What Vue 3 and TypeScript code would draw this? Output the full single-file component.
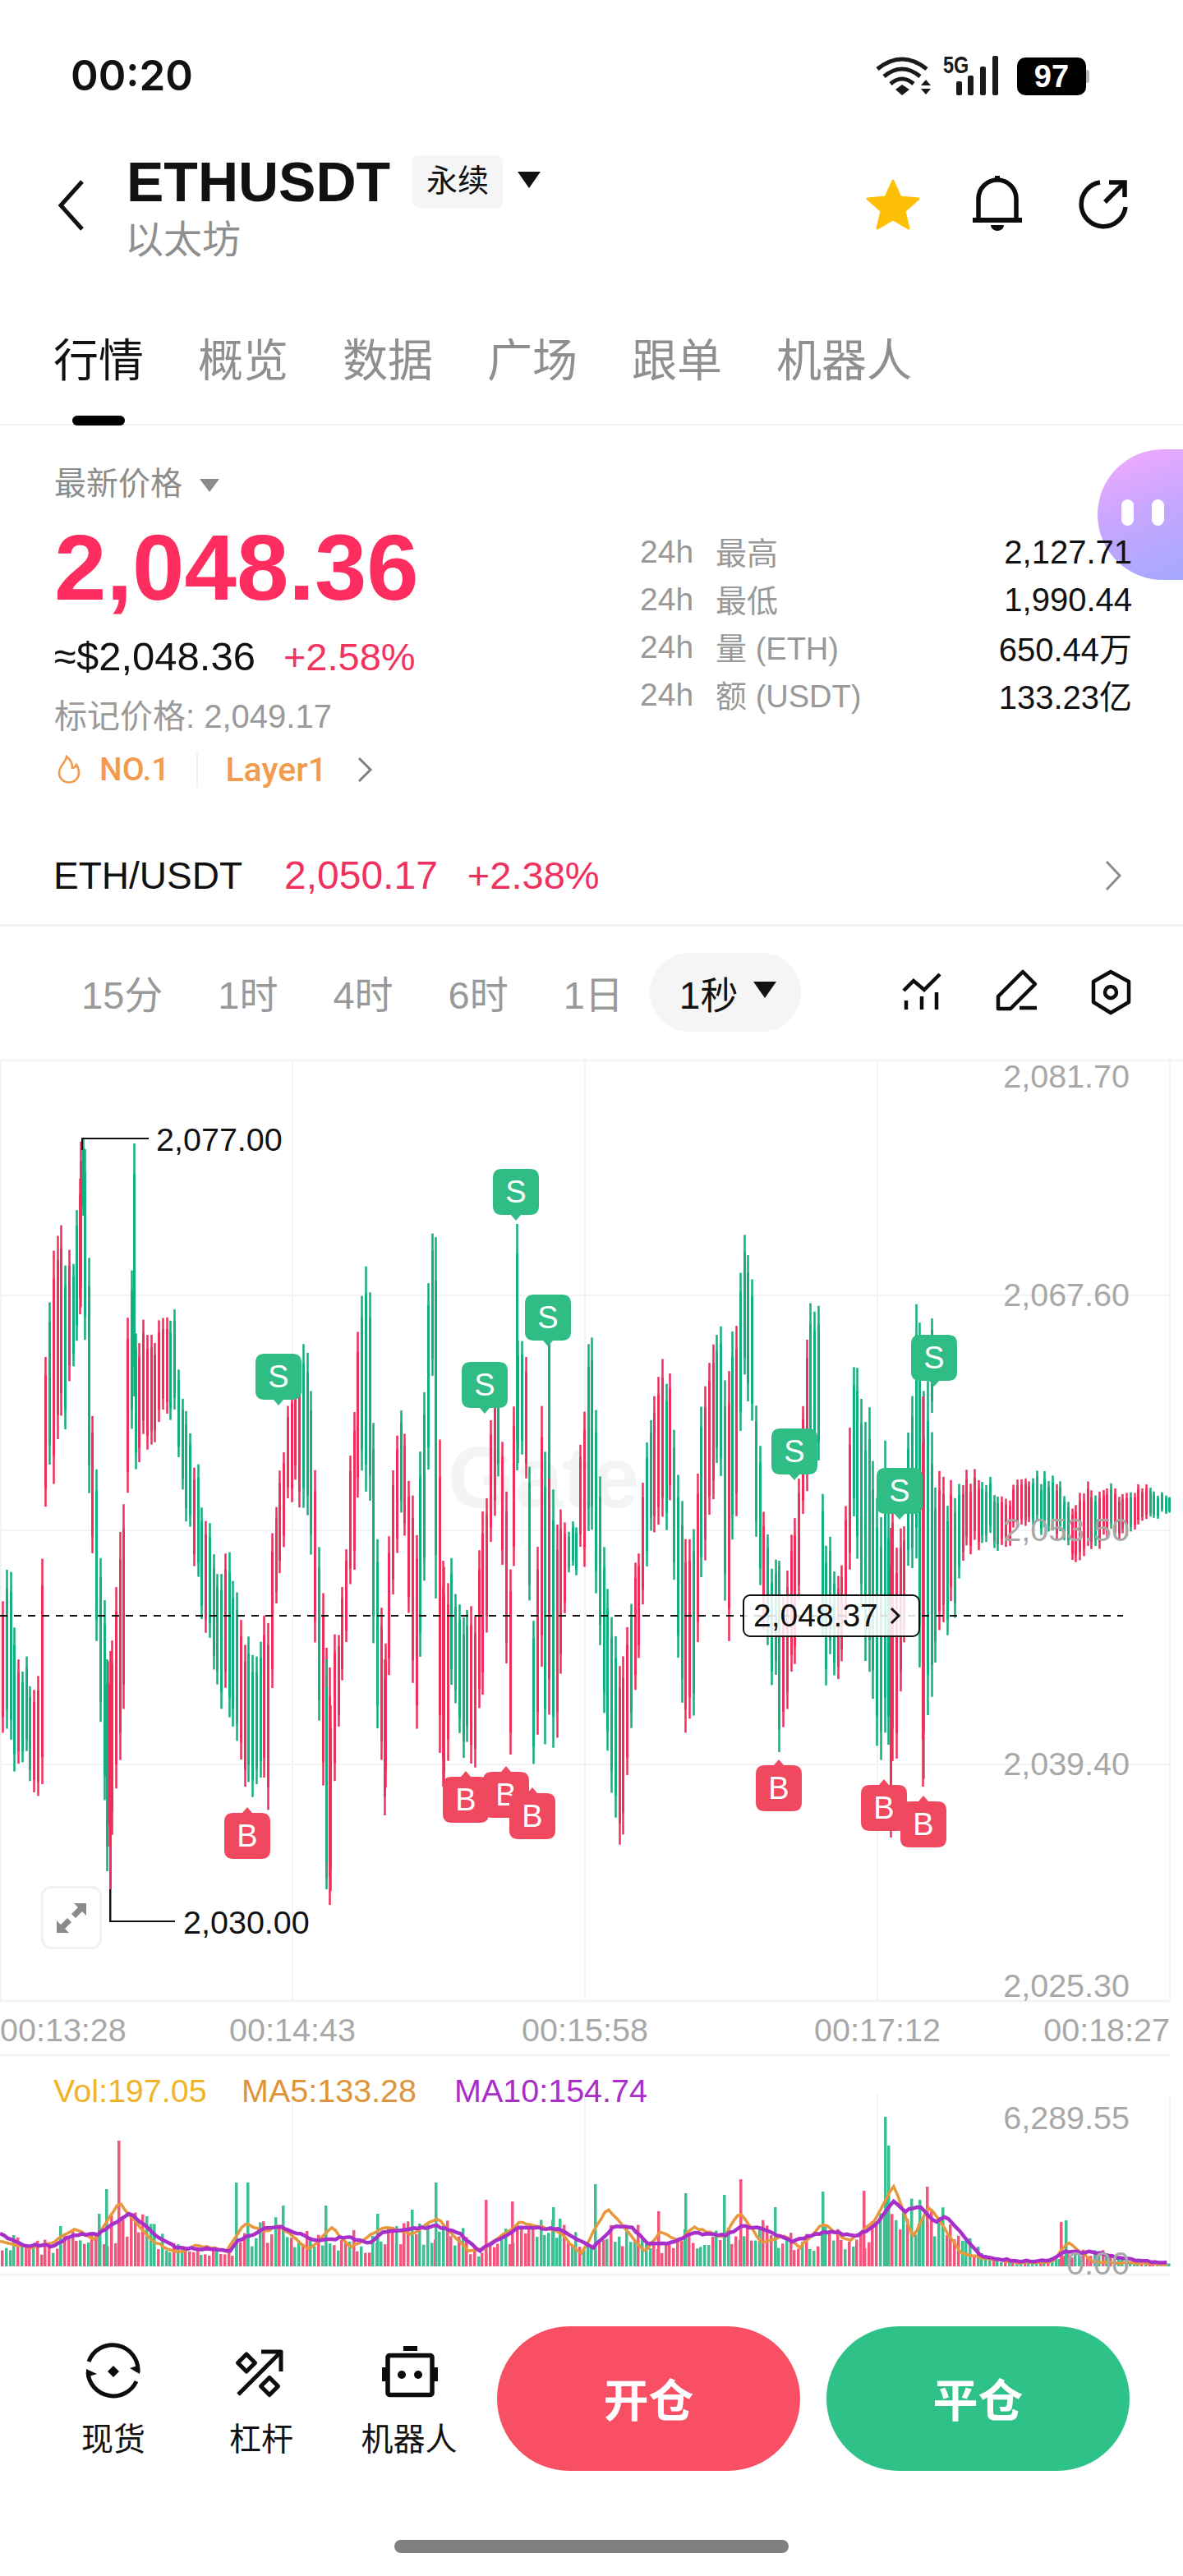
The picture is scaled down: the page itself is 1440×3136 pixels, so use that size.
<script setup lang="ts">
type Bar = { x: number; top: number; bottom: number; up: boolean }

const makeRandom = (seed: number) => () => {
  seed = (seed + 0x6d2b79f5) | 0
  let t = Math.imul(seed ^ (seed >>> 15), 1 | seed)
  t = (t + Math.imul(t ^ (t >>> 7), 61 | t)) ^ t
  return ((t ^ (t >>> 14)) >>> 0) / 4294967296
}

const lerp = (pts: number[][], x: number, col = 1) => {
  for (let i = 1; i < pts.length; i++) {
    if (x <= pts[i][0]) {
      const a = pts[i - 1]
      const b = pts[i]
      const k = (x - a[0]) / (b[0] - a[0] || 1)
      return a[col] + (b[col] - a[col]) * k
    }
  }
  return pts[pts.length - 1][col]
}

// x, top of bars, bottom of bars
const range = [
  [0, 1945, 2095], [10, 1875, 2120], [20, 2010, 2150], [30, 2020, 2150], [44, 2060, 2200],
  [50, 1860, 2200], [55, 1613, 1808], [66, 1528, 1855], [75, 1495, 1755], [86, 1557, 1690],
  [96, 1393, 1600], [105, 1402, 1755], [110, 1718, 1900], [118, 1815, 2050], [130, 2020, 2280],
  [150, 1802, 2095], [156, 1483, 1703], [165, 1630, 1790], [210, 1598, 1720], [225, 1710, 1850],
  [240, 1790, 1940], [260, 1900, 2065], [280, 1890, 2100], [300, 1990, 2190], [315, 2020, 2200],
  [325, 1925, 2190], [335, 1820, 1950], [350, 1700, 1830], [375, 1600, 1830], [385, 1843, 2065],
  [395, 1995, 2280], [400, 2020, 2300], [410, 2000, 2115], [420, 1880, 2010], [432, 1640, 1870],
  [445, 1535, 1830], [455, 1730, 2020], [465, 2020, 2210], [480, 1730, 1910], [490, 1720, 1840],
  [505, 1855, 2145], [520, 1540, 1800], [525, 1522, 1690], [530, 1560, 2110], [540, 1890, 2175],
  [550, 1920, 2070], [570, 1975, 2170], [585, 1870, 2115], [595, 1730, 1910], [605, 1650, 1800],
  [620, 1890, 2160], [627, 1600, 1785], [640, 1650, 1800], [648, 1970, 2170], [660, 1695, 2095],
  [675, 1820, 2165], [690, 1860, 1915], [700, 1850, 1915], [712, 1650, 1905], [720, 1620, 1870],
  [733, 1880, 2100], [745, 1960, 2220], [757, 2000, 2237], [775, 1880, 2035], [790, 1730, 1890],
  [800, 1660, 1870], [815, 1650, 1840], [827, 1830, 2100], [840, 1860, 2115], [855, 1650, 1890],
  [875, 1615, 1790], [885, 1680, 2060], [895, 1580, 1820], [903, 1478, 1690], [912, 1528, 1730],
  [920, 1745, 1930], [932, 1870, 2025], [945, 1920, 2085], [960, 1900, 2095], [975, 1720, 1880],
  [985, 1575, 1790], [995, 1600, 1840], [1000, 1840, 2050], [1015, 1880, 2020], [1025, 1920, 2060],
  [1035, 1650, 1850], [1048, 1650, 1950], [1060, 1720, 2075], [1075, 1785, 2155], [1085, 1860, 2235],
  [1098, 1880, 2025], [1110, 1620, 1880], [1122, 1605, 2175], [1140, 1790, 2000], [1160, 1800, 1960],
  [1170, 1800, 1900], [1190, 1790, 1885], [1220, 1820, 1880], [1250, 1800, 1860], [1285, 1790, 1870],
  [1300, 1830, 1890], [1315, 1810, 1900], [1340, 1810, 1880], [1375, 1815, 1870], [1400, 1810, 1850],
  [1424, 1825, 1845],
]

const step = 4.75
const rnd = makeRandom(20481)
const bars: Bar[] = []
for (let x = 2; x < 1424; x += step) {
  const top = lerp(range, x, 1)
  const bottom = lerp(range, x, 2)
  const size = bottom - top
  // bars stagger up and down inside the range
  const shift = (rnd() - 0.5) * size * 0.28
  const mid = (lerp(range, x + 8, 1) + lerp(range, x + 8, 2)) / 2
  const rising = mid < (top + bottom) / 2
  bars.push({
    x: Math.round(x),
    top: top + shift + rnd() * size * 0.12,
    bottom: bottom + shift - rnd() * size * 0.12,
    up: rnd() < 0.18 ? !rising : rising,
  })
}
// the long wicks
bars.push(
  { x: 96, top: 1435, bottom: 1600, up: true },
  { x: 100, top: 1386, bottom: 1480, up: false },
  { x: 129, top: 2020, bottom: 2278, up: false },
  { x: 133, top: 2010, bottom: 2339, up: true },
  { x: 162, top: 1392, bottom: 1700, up: false },
  { x: 396, top: 2020, bottom: 2300, up: false },
  { x: 400, top: 2030, bottom: 2319, up: true },
  { x: 467, top: 2020, bottom: 2210, up: true },
  { x: 538, top: 1900, bottom: 2175, up: true },
  { x: 628, top: 1490, bottom: 1790, up: false },
  { x: 667, top: 1615, bottom: 1800, up: false },
  { x: 947, top: 1900, bottom: 2133, up: false },
  { x: 1083, top: 1860, bottom: 2237, up: true },
  { x: 1122, top: 1700, bottom: 2175, up: true },
  { x: 1133, top: 1605, bottom: 1720, up: false },
)

const markers = [
  { kind: 'S', x: 311, y: 1648 }, { kind: 'S', x: 562, y: 1658 }, { kind: 'S', x: 600, y: 1423 },
  { kind: 'S', x: 639, y: 1576 }, { kind: 'S', x: 939, y: 1739 }, { kind: 'S', x: 1067, y: 1787 },
  { kind: 'S', x: 1109, y: 1625 },
  { kind: 'B', x: 273, y: 2207 }, { kind: 'B', x: 588, y: 2157 }, { kind: 'B', x: 539, y: 2163 },
  { kind: 'B', x: 620, y: 2183 }, { kind: 'B', x: 920, y: 2149 }, { kind: 'B', x: 1048, y: 2173 },
  { kind: 'B', x: 1096, y: 2193 },
]

const markerPath = (m: { kind: string; x: number; y: number }) => {
  const l = m.x
  const r = m.x + 56
  const t = m.y
  const b = m.y + 56
  const c = m.x + 28
  const rad = 11
  const tail = m.kind === 'S'
    ? `L${c + 6} ${b} L${c} ${b + 7} L${c - 6} ${b} `
    : ''
  const head = m.kind === 'B' ? `L${c - 6} ${t} L${c} ${t - 7} L${c + 6} ${t} ` : ''
  return `M${l + rad} ${t} ${head}L${r - rad} ${t} Q${r} ${t} ${r} ${t + rad} L${r} ${b - rad} Q${r} ${b} ${r - rad} ${b} ${tail}L${l + rad} ${b} Q${l} ${b} ${l} ${b - rad} L${l} ${t + rad} Q${l} ${t} ${l + rad} ${t}Z`
}

// volume panel, traced as [x, y] on the page
const toPage = (p: number[][]) => p.map(([x, y]) => [x / 1.089, 2280 + y / 3])
const ma10 = toPage([
  [0, 1320], [30, 1360], [70, 1362], [100, 1320], [130, 1320], [172, 1240], [205, 1320], [235, 1370],
  [290, 1375], [305, 1385], [315, 1345], [355, 1295], [375, 1295], [420, 1345], [460, 1330], [490, 1350],
  [510, 1310], [545, 1300], [580, 1290], [610, 1320], [635, 1380], [690, 1295], [740, 1300], [785, 1370],
  [815, 1290], [835, 1290], [860, 1355], [895, 1350], [915, 1315], [960, 1325], [985, 1290], [1010, 1300],
  [1050, 1345], [1095, 1310], [1135, 1325], [1160, 1290], [1185, 1200], [1200, 1235], [1218, 1215],
  [1240, 1275], [1255, 1255], [1300, 1400], [1350, 1420], [1395, 1415], [1410, 1385], [1450, 1385],
  [1490, 1410], [1550, 1425],
])
const ma5 = toPage([
  [0, 1345], [40, 1370], [70, 1350], [100, 1300], [125, 1340], [158, 1205], [200, 1340], [235, 1390],
  [260, 1360], [300, 1380], [325, 1280], [350, 1310], [370, 1290], [410, 1375], [440, 1295], [465, 1370],
  [510, 1290], [545, 1320], [580, 1260], [620, 1380], [640, 1375], [690, 1275], [740, 1310], [770, 1390],
  [805, 1225], [855, 1385], [875, 1310], [900, 1345], [920, 1295], [960, 1330], [980, 1240], [1010, 1350],
  [1040, 1325], [1060, 1370], [1090, 1280], [1125, 1345], [1160, 1270], [1185, 1140], [1210, 1330],
  [1232, 1220], [1275, 1390], [1310, 1410], [1350, 1425], [1395, 1420], [1415, 1350], [1450, 1420],
  [1550, 1430],
])

const volBase = 2759
const volRnd = makeRandom(7719)
const volBars: Bar[] = []
for (let x = 1; x < 1424; x += step) {
  const h = (volBase - lerp(ma10, x)) * (0.5 + volRnd() * 0.8)
  volBars.push({ x: Math.round(x), top: volBase - h, bottom: volBase, up: volRnd() > 0.48 })
}
const spikes: [number, number, boolean][] = [
  [143, 2606, true], [128, 2665, false], [119, 2695, false], [72, 2710, false], [286, 2657, false],
  [300, 2657, false], [343, 2685, false], [395, 2685, false], [458, 2695, false], [500, 2690, false],
  [529, 2657, false], [590, 2678, true], [622, 2680, true], [672, 2687, false], [723, 2659, false],
  [800, 2692, true], [833, 2670, false], [880, 2672, false], [900, 2653, true], [942, 2687, false],
  [1000, 2668, false], [1050, 2667, true], [1076, 2577, false], [1080, 2612, false], [1118, 2678, false],
  [1127, 2662, true], [1290, 2705, true], [1296, 2703, false],
]
for (const [x, top, up] of spikes) volBars.push({ x, top, bottom: volBase, up })

const maLine = (pts: number[][], seed: number) => {
  const r = makeRandom(seed)
  const out: string[] = []
  for (let x = 0; x <= 1424; x += step) {
    out.push(`${x.toFixed(1)},${(lerp(pts, x) + (r() - 0.5) * 2.4).toFixed(1)}`)
  }
  return out.join(' ')
}
const ma5Line = maLine(ma5, 11)
const ma10Line = maLine(ma10, 23)

const tabs = ['行情', '概览', '数据', '广场', '跟单', '机器人']
const periods = ['15分', '1时', '4时', '6时', '1日']
const stats = [
  { label: '最高', value: '2,127.71' },
  { label: '最低', value: '1,990.44' },
  { label: '量 (ETH)', value: '650.44万' },
  { label: '额 (USDT)', value: '133.23亿' },
]
const priceTicks = [
  { text: '2,081.70', y: 1324 },
  { text: '2,067.60', y: 1590 },
  { text: '2,053.50', y: 1876 },
  { text: '2,039.40', y: 2161 },
  { text: '2,025.30', y: 2431 },
]
const gridX = [356, 712, 1068, 1424]
const gridY = [1577, 1863, 2148]
</script>

<template>
  <div class="page">
    <div class="status">
      <span class="clock">00:20</span>
      <div class="status-icons">
        <svg class="wifi" width="70" height="50" viewBox="0 0 70 50" fill="none" stroke="#1a1a1a" stroke-width="5">
          <path d="M3 16 Q33 -8 63 16" />
          <path d="M11 25 Q33 7 55 25" />
          <path d="M19 34 Q33 22 47 34" />
          <path d="M25 41 L33 35 L42 41 L33 48 Z" fill="#1a1a1a" stroke="none" />
          <path d="M62 29 L68 36 L56 36 Z M56 40 L68 40 L62 47 Z" fill="#1a1a1a" stroke="none" />
        </svg>
        <div class="signal">
          <span class="five-g">5G</span>
          <i class="sig s1"></i><i class="sig s2"></i><i class="sig s3"></i><i class="sig s4"></i>
        </div>
        <div class="battery"><span>97</span></div>
      </div>
    </div>

    <header class="head">
      <svg class="back" width="36" height="64" viewBox="0 0 36 64" fill="none" stroke="#111" stroke-width="5">
        <path d="M32 3 L6 32 L32 61" />
      </svg>
      <div class="title">
        <div class="title-line">
          <span class="symbol">ETHUSDT</span>
          <span class="chip">永续</span>
          <i class="tri"></i>
        </div>
        <div class="coin">以太坊</div>
      </div>
      <div class="head-actions">
        <svg width="70" height="66" viewBox="0 0 70 66">
          <path d="M35 4 L44 24 L66 26 L49 41 L54 62 L35 51 L16 62 L21 41 L4 26 L26 24 Z" fill="#fdc006" stroke="#fdc006" stroke-width="3" stroke-linejoin="round" />
        </svg>
        <svg width="60" height="70" viewBox="0 0 60 70" fill="none" stroke="#0c0c0c" stroke-width="5.5">
          <path d="M7 52 V28 A23 23 0 0 1 53 28 V52" />
          <path d="M0 54 H60" stroke-width="6" />
          <path d="M30 0 V6" stroke-width="6" />
          <path d="M22 60 H38 A8 7 0 0 1 22 60 Z" fill="#0c0c0c" stroke="none" />
        </svg>
        <svg class="share" width="62" height="60" viewBox="0 0 62 60" fill="none" stroke="#0c0c0c" stroke-width="5.5">
          <path d="M27 3 A27 27 0 1 0 58 33" />
          <path d="M33 27 L56 4" />
          <path d="M38 3 H57 V21" />
        </svg>
      </div>
    </header>

    <nav class="tabs">
      <span v-for="(t, i) in tabs" :key="t" class="tab" :class="{ on: i === 0 }">{{ t }}</span>
    </nav>

    <section class="quote">
      <div class="bubble"><i></i><i></i></div>
      <div class="quote-left">
        <div class="last-label">最新价格 <i class="tri small"></i></div>
        <div class="last-price">2,048.36</div>
        <div class="usd-line">
          <span class="usd">≈$2,048.36</span>
          <span class="pct">+2.58%</span>
        </div>
        <div class="mark">标记价格: 2,049.17</div>
        <div class="tags">
          <svg width="28" height="36" viewBox="0 0 28 36" fill="none" stroke="#f29b4e" stroke-width="2.6">
            <path d="M11 2 C11 8 2 13 2 22 A12 11.5 0 0 0 26 22 C26 18 25 15 23 12 C22 14 20 16 18 16 C18 10 15 5 11 2 Z" />
          </svg>
          <span class="no">NO.1</span>
          <i class="tag-sep"></i>
          <span class="layer">Layer1</span>
          <svg class="tag-arrow" width="20" height="32" viewBox="0 0 20 32" fill="none" stroke="#808080" stroke-width="3">
            <path d="M3 2 L17 16 L3 30" />
          </svg>
        </div>
      </div>
      <div class="quote-right">
        <div v-for="s in stats" :key="s.label" class="stat">
          <span class="stat-h">24h</span>
          <span class="stat-label">{{ s.label }}</span>
          <span class="stat-value">{{ s.value }}</span>
        </div>
      </div>
    </section>

    <div class="spot-row">
      <span class="spot-name">ETH/USDT</span>
      <span class="spot-price">2,050.17</span>
      <span class="spot-pct">+2.38%</span>
      <svg class="spot-arrow" width="22" height="38" viewBox="0 0 22 38" fill="none" stroke="#8c8c8c" stroke-width="3">
        <path d="M3 2 L19 19 L3 36" />
      </svg>
    </div>

    <div class="periods">
      <span v-for="p in periods" :key="p" class="period">{{ p }}</span>
      <span class="period-pill">1秒 <i class="tri"></i></span>
      <div class="tools">
        <svg width="60" height="60" viewBox="0 0 60 60" fill="none" stroke="#0c0c0c" stroke-width="4.5">
          <path d="M8 28 L20 16 L33 27 L52 8" />
          <path d="M11 40 V51 M30 35 V51 M48 30 V51" />
        </svg>
        <svg width="60" height="60" viewBox="0 0 60 60" fill="none" stroke="#0c0c0c" stroke-width="4.5" stroke-linejoin="round">
          <path d="M38 5 L53 20 L23 50 L8 50 L8 35 Z" />
          <path d="M34 49 H55" />
        </svg>
        <svg width="60" height="60" viewBox="0 0 60 60" fill="none" stroke="#0c0c0c" stroke-width="4.5" stroke-linejoin="round">
          <path d="M30 5 L52 17 L52 42 L30 55 L9 42 L9 17 Z" />
          <circle cx="30" cy="30" r="7" />
        </svg>
      </div>
    </div>

    <div class="chart">
      <svg class="chart-svg" width="1440" height="1480" viewBox="0 1290 1440 1480">
        <g stroke="#f3f3f3" stroke-width="2">
          <path d="M0 1291 H1440 M0 2436 H1424 M0 2502 H1424 M0 2769 H1424" stroke-width="3" />
          <path v-for="y in gridY" :key="y" :d="`M0 ${y} H1424`" />
          <path d="M1 1291 V2436" />
          <path v-for="x in gridX" :key="x" :d="`M${x} 1291 V2436 M${x} 2550 V2759`" />
        </g>
        <text x="545" y="1835" class="mark-logo">Gate</text>

        <g v-for="(b, i) in bars" :key="i" :fill="b.up ? '#ee2f5c' : '#12b07f'">
          <rect :x="b.x + 0.25" :y="b.top" width="2.5" :height="b.bottom - b.top" />
          <rect :x="b.x" :y="b.top + (b.bottom - b.top) * 0.12" width="3" :height="(b.bottom - b.top) * 0.76" />
        </g>

        <path d="M100 1400 V1386 H181 M134 2300 V2339 H213" fill="none" stroke="#111" stroke-width="2" />
        <text x="190" y="1401" class="tick dark">2,077.00</text>
        <text x="223" y="2354" class="tick dark">2,030.00</text>

        <path d="M0 1967 H1367" stroke="#111" stroke-width="2" stroke-dasharray="9 8" />

        <g v-for="(m, i) in markers" :key="i">
          <path :d="markerPath(m)" :fill="m.kind === 'S' ? '#2fbd85' : '#f0485f'" />
          <text :x="m.x + 28" :y="m.y + 41" class="marker-text">{{ m.kind }}</text>
        </g>

        <text v-for="t in priceTicks" :key="t.text" x="1375" :y="t.y" class="tick end">{{ t.text }}</text>
        <text x="0" y="2485" class="tick">00:13:28</text>
        <text x="356" y="2485" class="tick mid">00:14:43</text>
        <text x="712" y="2485" class="tick mid">00:15:58</text>
        <text x="1068" y="2485" class="tick mid">00:17:12</text>
        <text x="1424" y="2485" class="tick end">00:18:27</text>

        <text x="65" y="2559" class="tick vol">Vol:197.05</text>
        <text x="294" y="2559" class="tick ma5">MA5:133.28</text>
        <text x="553" y="2559" class="tick ma10">MA10:154.74</text>
        <text x="1375" y="2592" class="tick end">6,289.55</text>

        <rect v-for="(b, i) in volBars" :key="i" :x="b.x" :y="b.top" width="3.5" :height="b.bottom - b.top" :fill="b.up ? '#f2567d' : '#3dbe93'" />
        <polyline :points="ma5Line" fill="none" stroke="#e8973a" stroke-width="3.5" />
        <polyline :points="ma10Line" fill="none" stroke="#a92fcb" stroke-width="4.5" />
        <text x="1375" y="2769" class="tick end">0.00</text>
      </svg>

      <div class="price-tag">
        <span>2,048.37</span>
        <svg width="16" height="22" viewBox="0 0 16 22" fill="none" stroke="#111" stroke-width="3">
          <path d="M3 2 L12 11 L3 20" />
        </svg>
      </div>
      <div class="expand">
        <svg width="38" height="38" viewBox="0 0 38 38" fill="#8a8a8a">
          <path d="M22 1 H37 V16 L32 11 L24 19 L19 14 L27 6 Z" />
          <path d="M1 22 V37 H16 L11 32 L19 24 L14 19 L6 27 Z" />
        </svg>
      </div>
    </div>

    <footer class="foot">
      <div class="shortcut">
        <svg width="70" height="70" viewBox="0 0 70 70" fill="none" stroke="#0c0c0c" stroke-width="5">
          <path d="M5 23 A31 31 0 0 1 65 36" />
          <path d="M4 36 A31 31 0 0 0 63 47" />
          <path d="M35 28 L42 35 L35 42 L28 35 Z" fill="#0c0c0c" stroke="none" />
          <path d="M55 31 L67 27 L67 38 Z M2 32 L15 38 L2 42 Z" fill="#0c0c0c" stroke="none" />
        </svg>
        <span>现货</span>
      </div>
      <div class="shortcut">
        <svg width="70" height="70" viewBox="0 0 70 70" fill="none" stroke="#0c0c0c" stroke-width="5" stroke-linejoin="round">
          <path d="M7 63 L58 12" />
          <path d="M35 11 H59 V35" />
          <path d="M17 14 L27.5 24.5 L17 35 L6.5 24.5 Z" />
          <path d="M45 42.5 L55.5 53 L45 63.5 L34.5 53 Z" />
        </svg>
        <span>杠杆</span>
      </div>
      <div class="shortcut">
        <svg width="70" height="70" viewBox="0 0 70 70" fill="#0c0c0c">
          <rect x="28" y="4" width="17" height="6" />
          <rect x="9" y="15.5" width="54" height="48" rx="2" fill="none" stroke="#0c0c0c" stroke-width="5.5" />
          <rect x="2" y="30" width="5" height="17" />
          <rect x="65" y="30" width="5" height="17" />
          <circle cx="26" cy="39" r="5" />
          <circle cx="46" cy="39" r="5" />
        </svg>
        <span>机器人</span>
      </div>
      <button class="trade open">开仓</button>
      <button class="trade close">平仓</button>
    </footer>
    <div class="home-bar"><i></i></div>
  </div>
</template>

<style>
body {
  background: #fff;
}
</style>

<style scoped>
.page {
  width: 1440px;
  height: 3136px;
  overflow: hidden;
  background: #fff;
  color: #111;
  font-family: "Liberation Sans", "Noto Sans CJK SC", sans-serif;
}

.tri {
  display: inline-block;
  width: 0;
  height: 0;
  border-left: 14px solid transparent;
  border-right: 14px solid transparent;
  border-top: 20px solid #111;
}

.tri.small {
  border-left-width: 12px;
  border-right-width: 12px;
  border-top: 16px solid #8c8c8c;
  margin-left: 10px;
  vertical-align: 3px;
}

.status {
  height: 150px;
  display: flex;
  justify-content: space-between;
  align-items: flex-start;
  padding: 62px 118px 0 86px;
  box-sizing: border-box;
}

.clock {
  font-family: Inter, "Liberation Sans", sans-serif;
  font-weight: 600;
  font-size: 51px;
  line-height: 60px;
}

.status-icons {
  display: flex;
  align-items: flex-start;
  margin-top: 6px;
}

.wifi {
  margin-right: 16px;
}

.signal {
  position: relative;
  width: 64px;
  height: 48px;
  margin-right: 23px;
}

.five-g {
  position: absolute;
  left: -3px;
  top: -4px;
  font-size: 30px;
  line-height: 30px;
  font-weight: 700;
  transform: scaleX(0.78);
  transform-origin: left top;
  color: #1a1a1a;
}

.sig {
  position: absolute;
  bottom: 0;
  width: 7px;
  background: #1a1a1a;
  border-radius: 2px;
}

.s1 { left: 13px; height: 17px; }
.s2 { left: 27px; height: 24px; }
.s3 { left: 42px; height: 35px; }
.s4 { left: 57px; height: 48px; }

.battery {
  position: relative;
  width: 84px;
  height: 46px;
  margin-top: 2px;
  background: #000;
  border-radius: 10px;
  text-align: center;
}

.battery::after {
  content: "";
  position: absolute;
  right: -4px;
  top: 15px;
  width: 4px;
  height: 16px;
  background: #b5b5b5;
  border-radius: 0 3px 3px 0;
}

.battery span {
  color: #fff;
  font-weight: 700;
  font-size: 38px;
  line-height: 46px;
}

.head {
  height: 200px;
  display: flex;
  align-items: flex-start;
  box-sizing: border-box;
  padding: 37px 66px 0 68px;
}

.back {
  margin: 31px 50px 0 0;
}

.title-line {
  display: flex;
  align-items: center;
  height: 66px;
  margin-top: 1px;
}

.symbol {
  font-size: 68px;
  font-weight: 700;
  line-height: 66px;
}

.chip {
  width: 110px;
  height: 64px;
  margin-left: 27px;
  background: #f5f5f5;
  border-radius: 8px;
  text-align: center;
  font-size: 38px;
  line-height: 62px;
}

.title-line .tri {
  margin-left: 18px;
  margin-top: -4px;
}

.coin {
  margin-top: 8px;
  margin-left: -2px;
  font-size: 47px;
  line-height: 60px;
  color: #8f8f8f;
}

.head-actions {
  margin-left: auto;
  margin-top: 27px;
  display: flex;
  align-items: center;
  gap: 62px;
}

.share {
  margin-left: 6px;
}

.tabs {
  height: 168px;
  display: flex;
  gap: 66px;
  padding: 60px 0 0 65px;
  box-sizing: border-box;
  border-bottom: 2px solid #f2f2f2;
}

.tab {
  position: relative;
  font-size: 55px;
  line-height: 58px;
  height: 58px;
  color: #8f8f8f;
}

.tab.on {
  color: #111;
}

.tab.on::after {
  content: "";
  position: absolute;
  left: 23px;
  top: 96px;
  width: 64px;
  height: 12px;
  border-radius: 6px;
  background: #000;
}

.quote {
  position: relative;
  height: 488px;
  display: flex;
  padding: 0 66px;
}

.bubble {
  position: absolute;
  right: 0;
  top: 29px;
  width: 104px;
  height: 159px;
  border-radius: 80px 0 0 80px;
  background: linear-gradient(160deg, #f6aaff 0%, #c6a6ff 50%, #a5a8ff 100%);
  display: flex;
  justify-content: flex-start;
  gap: 22px;
  padding: 61px 0 0 29px;
  box-sizing: border-box;
}

.bubble i {
  width: 15px;
  height: 32px;
  border-radius: 8px;
  background: #fff;
}

.quote-left {
  width: 713px;
  padding-top: 46px;
}

.last-label {
  height: 50px;
  font-size: 39px;
  line-height: 50px;
  color: #8c8c8c;
}

.last-price {
  margin-top: 12px;
  height: 130px;
  font-size: 114px;
  line-height: 130px;
  font-weight: 700;
  color: #fe2d5f;
}

.usd-line {
  margin-top: 13px;
  height: 60px;
  font-size: 49px;
  line-height: 60px;
}

.pct {
  margin-left: 34px;
  font-size: 47px;
  color: #f2325f;
}

.mark {
  margin-top: 18px;
  height: 50px;
  font-size: 40px;
  line-height: 50px;
  color: #9a9a9a;
}

.tags {
  margin-top: 15px;
  height: 50px;
  display: flex;
  align-items: center;
  font-family: Roboto, "Liberation Sans", sans-serif;
  font-weight: 500;
  font-size: 39px;
  color: #f29b4e;
}

.tags svg {
  margin-left: 4px;
}

.no {
  margin-left: 23px;
}

.tag-sep {
  width: 2px;
  height: 42px;
  margin: 0 33px;
  background: #f0f0f0;
}

.layer {
  font-size: 41px;
}

.tags .tag-arrow {
  margin-left: 36px;
}

.quote-right {
  position: relative;
  flex: 1;
  margin-right: -4px;
  padding-top: 125px;
}

.stat {
  height: 58px;
  display: flex;
  align-items: center;
  font-size: 39px;
  color: #999;
}

.stat-label {
  margin-left: 27px;
  font-size: 38px;
  margin-top: -3px;
}

.stat-value {
  margin-left: auto;
  font-size: 40px;
  color: #111;
}

.spot-row {
  height: 122px;
  display: flex;
  align-items: center;
  padding: 0 74px 0 65px;
  box-sizing: border-box;
  border-bottom: 3px solid #f2f2f2;
  font-size: 48px;
}

.spot-name {
  font-size: 46px;
}

.spot-price {
  margin-left: 51px;
  color: #ef3160;
}

.spot-pct {
  margin-left: 36px;
  font-size: 47px;
  color: #ef3160;
}

.spot-arrow {
  margin-left: auto;
}

.periods {
  height: 162px;
  display: flex;
  align-items: center;
  gap: 67px;
  padding-left: 99px;
  box-sizing: border-box;
  padding-bottom: 3px;
}

.period {
  font-size: 47px;
  color: #999;
}

.period-pill {
  margin-left: -35px;
  width: 184px;
  height: 96px;
  box-sizing: border-box;
  padding-left: 36px;
  border-radius: 48px;
  background: #f5f5f5;
  display: flex;
  align-items: center;
  font-size: 46px;
  color: #111;
}

.period-pill .tri {
  margin-left: 19px;
  margin-top: -6px;
}

.tools {
  margin-left: auto;
  margin-right: 58px;
  display: flex;
  gap: 55px;
}

.chart {
  position: relative;
  height: 1480px;
}

.chart-svg {
  display: block;
  overflow: visible;
}

.mark-logo {
  font-size: 105px;
  font-weight: 700;
  fill: #f3f4f4;
}

.tick {
  font-size: 39.5px;
  fill: #a8a8a8;
}

.tick.dark {
  fill: #111;
}

.tick.vol {
  fill: #f0b429;
}

.tick.ma5 {
  fill: #e0943a;
}

.tick.ma10 {
  fill: #a92ec8;
}

.tick.end {
  text-anchor: end;
}

.tick.mid {
  text-anchor: middle;
}

.marker-text {
  font-size: 38px;
  fill: #fff;
  text-anchor: middle;
}

.price-tag {
  position: absolute;
  left: 904px;
  top: 651px;
  width: 216px;
  height: 52px;
  box-sizing: border-box;
  padding: 0 20px 0 11px;
  display: flex;
  align-items: center;
  justify-content: space-between;
  border: 2px solid #111;
  border-radius: 9px;
  background: rgba(255, 255, 255, 0.85);
  font-size: 39px;
}

.expand {
  position: absolute;
  left: 50px;
  top: 1006px;
  width: 74px;
  height: 77px;
  box-sizing: border-box;
  border: 3px solid #f1f1f1;
  border-radius: 12px;
  background: #fff;
  display: flex;
  align-items: center;
  justify-content: center;
}

.foot {
  height: 296px;
  display: flex;
  align-items: flex-start;
  box-sizing: border-box;
  padding: 62px 65px 0 0;
}

.shortcut {
  position: relative;
  width: 180px;
  margin-top: 20px;
  display: flex;
  flex-direction: column;
  align-items: center;
  font-size: 39px;
  line-height: 46px;
  color: #111;
}

.shortcut:first-child {
  margin-left: 48px;
}

.shortcut svg {
  margin-bottom: 25px;
}

.trade {
  width: 369px;
  height: 176px;
  border: 0;
  border-radius: 88px;
  padding: 0 0 5px;
  color: #fff;
  font-family: inherit;
  font-size: 55px;
  font-weight: 700;
}

.trade.open {
  margin-left: 17px;
  background: #f94f65;
}

.trade.close {
  margin-left: 32px;
  background: #2ec288;
}

.home-bar {
  display: flex;
  justify-content: center;
  padding-top: 26px;
}

.home-bar i {
  width: 480px;
  height: 16px;
  border-radius: 8px;
  background: #808080;
}
</style>
